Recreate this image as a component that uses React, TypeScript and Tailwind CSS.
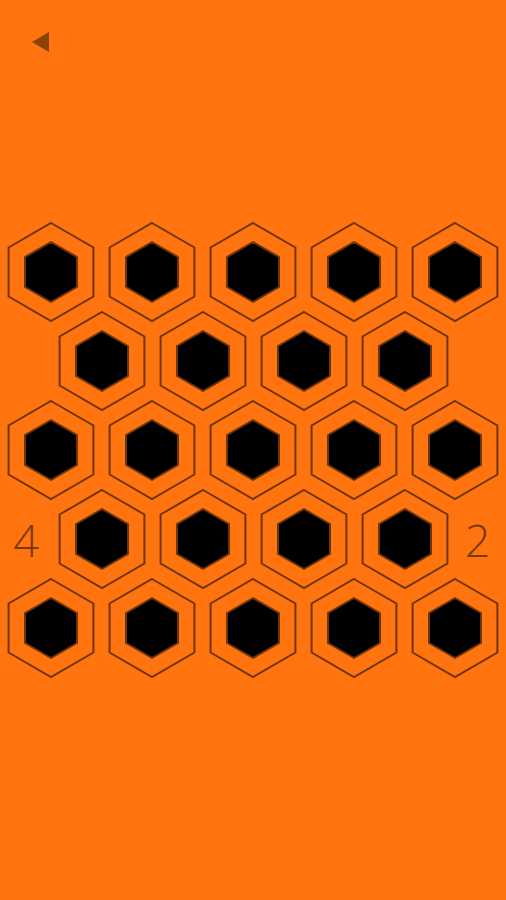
import React from 'react';

const STROKE = '#6e3608';

const Hex: React.FC = () => (
  <svg width="88" height="100" viewBox="0 0 88 100" className="shrink-0 overflow-visible">
    <polygon
      points="44,1 86.4,25.5 86.4,74.5 44,99 1.6,74.5 1.6,25.5"
      fill="none"
      stroke={STROKE}
      strokeWidth="2"
    />
    <polygon
      points="44,20 70,35 70,65 44,80 18,65 18,35"
      fill="#000"
      stroke={STROKE}
      strokeWidth="2"
      strokeLinejoin="round"
    />
  </svg>
);

const HexRow: React.FC<{ count: number; className?: string }> = ({ count, className }) => (
  <div className={`flex gap-[13px] ${className ?? ''}`}>
    {Array.from({ length: count }).map((_, i) => (
      <Hex key={i} />
    ))}
  </div>
);

const Score: React.FC<{ value: number; className?: string }> = ({ value, className }) => (
  <span
    className={`text-center text-[45px] leading-none font-light text-[#7a3a08] ${className ?? ''}`}
    style={{ fontFamily: '"Open Sans", "Noto Sans", sans-serif' }}
  >
    {value}
  </span>
);

export default function App() {
  return (
    <div className="w-[506px] h-[900px] bg-[#ff740f] flex flex-col overflow-hidden">
      {/* back button */}
      <div className="pt-[32px] pl-[32px]">
        <button className="block">
          <svg width="17" height="20" viewBox="0 0 17 20">
            <polygon points="0,10 17,0 17,20" fill="#8a4206" />
          </svg>
        </button>
      </div>

      {/* board */}
      <div className="mt-[170px] flex flex-col items-center">
        <HexRow count={5} />
        <HexRow count={4} className="-mt-[11px]" />
        <HexRow count={5} className="-mt-[11px]" />
        <div className="-mt-[11px] w-full flex items-center justify-between">
          <Score value={4} className="w-[52px] mr-[5px]" />
          <HexRow count={4} />
          <Score value={2} className="w-[57px]" />
        </div>
        <HexRow count={5} className="-mt-[11px]" />
      </div>
    </div>
  );
}
